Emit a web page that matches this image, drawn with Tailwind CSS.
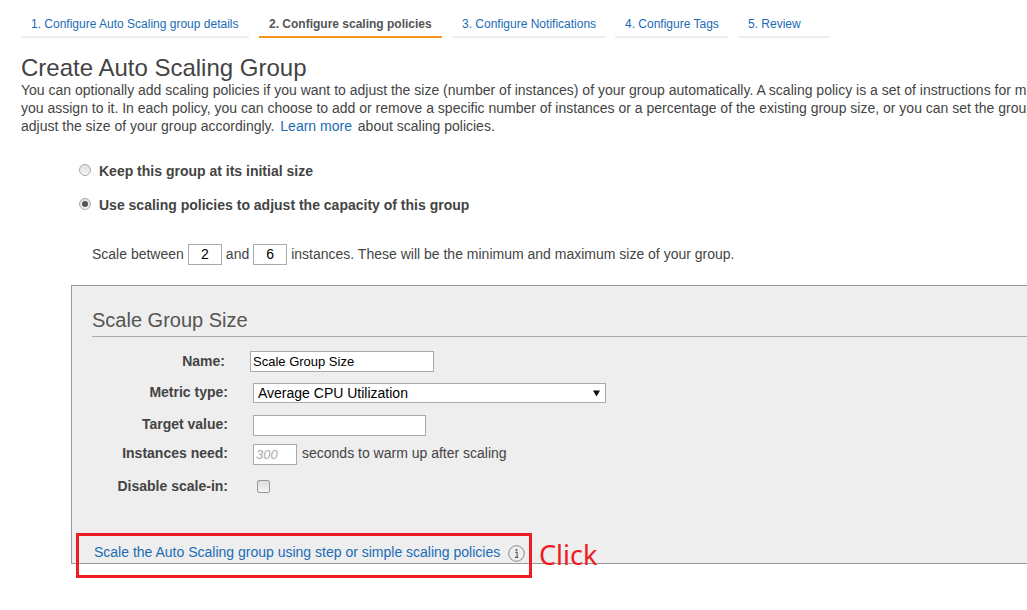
<!DOCTYPE html>
<html lang="en">
<head>
    <meta charset="UTF-8">
    <meta name="viewport" content="width=device-width, initial-scale=1.0">
    <script src="https://cdn.jsdelivr.net/npm/@tailwindcss/browser@4"></script>
    <title>Create Auto Scaling Group</title>
</head>
<body class="bg-white">
<div class="relative w-[1027px] h-[610px] overflow-hidden bg-white text-[#444] font-['Liberation_Sans',Arial,sans-serif]">

    <!-- wizard steps -->
    <div class="flex gap-[10px] pl-[21px] pt-[15px] text-[12px] leading-[18px] text-[#1a6cb5]">
        <div class="w-[228px] h-[23px] pl-[10px] border-b-2 border-[#eee]">1. Configure Auto Scaling group details</div>
        <div class="w-[183px] h-[23px] pl-[10px] border-b-2 border-[#f7941e] font-bold text-[#555]">2. Configure scaling policies</div>
        <div class="w-[153px] h-[23px] pl-[10px] border-b-2 border-[#eee]">3. Configure Notifications</div>
        <div class="w-[113px] h-[23px] pl-[10px] border-b-2 border-[#eee]">4. Configure Tags</div>
        <div class="w-[92px] h-[23px] pl-[10px] border-b-2 border-[#eee]">5. Review</div>
    </div>

    <h1 class="ml-[21px] mt-[16px] text-[24px] leading-[28px] h-[27px] font-normal text-[#444]">Create Auto Scaling Group</h1>

    <div class="ml-[21px] text-[14px] leading-[18px] whitespace-nowrap">
        <p>You can optionally add scaling policies if you want to adjust the size (number of instances) of your group automatically. A scaling policy is a set of instructions for making adjustments</p>
        <p>you assign to it. In each policy, you can choose to add or remove a specific number of instances or a percentage of the existing group size, or you can set the group to a fixed size</p>
        <p>adjust the size of your group accordingly. <a class="text-[#1a6cb5] mx-[2px]">Learn more</a> about scaling policies.</p>
    </div>

    <!-- radios -->
    <div class="ml-[79px] mt-[27px] flex items-center gap-2 h-[18px]">
        <span class="mb-[3px] w-3 h-3 rounded-full border border-[#aaa] bg-gradient-to-b from-[#e0e0e0] to-[#f4f4f4]"></span>
        <span class="text-[14px] font-bold">Keep this group at its initial size</span>
    </div>
    <div class="ml-[79px] mt-[16px] flex items-center gap-2 h-[18px]">
        <span class="mb-[3px] w-3 h-3 rounded-full border border-[#aaa] bg-gradient-to-b from-[#e0e0e0] to-[#f4f4f4] flex items-center justify-center">
            <span class="w-[6px] h-[6px] rounded-full bg-[#555]"></span>
        </span>
        <span class="text-[14px] font-bold">Use scaling policies to adjust the capacity of this group</span>
    </div>

    <div class="ml-[92px] mt-[30px] flex items-center h-[21px] text-[14px] whitespace-nowrap">
        <span>Scale between</span>
        <input value="2" class="ml-[4px] w-[34px] h-[21px] border border-[#aaa] bg-white text-center text-[14px] text-black">
        <span class="mx-[4px]">and</span>
        <input value="6" class="w-[34px] h-[21px] border border-[#aaa] bg-white text-center text-[14px] text-black">
        <span class="ml-[4px]">instances. These will be the minimum and maximum size of your group.</span>
    </div>

    <!-- policy panel -->
    <div class="ml-[71px] mt-[20px] w-[1000px] h-[279px] border border-[#999] bg-[#eee]">
        <h2 class="ml-[20px] mt-[22px] h-[29px] border-b border-[#aaa] text-[20px] leading-[24px] font-normal text-[#555]">Scale Group Size</h2>

        <div class="flex items-center h-[21px] mt-[14px]">
            <label class="w-[153px] text-right text-[14px] font-bold">Name:</label>
            <input value="Scale Group Size" class="ml-[25px] w-[184px] h-[21px] border border-[#aaa] bg-white px-[2px] text-[13px] text-black">
        </div>
        <div class="flex items-center h-[20px] mt-[11px]">
            <label class="w-[156px] pb-[2px] text-right text-[14px] font-bold">Metric type:</label>
            <div class="ml-[25px] w-[353px] h-[20px] flex items-center justify-between border border-[#aaa] bg-white pl-[4px] pr-[5px] text-[14px] text-black">
                <span>Average CPU Utilization</span>
                <svg width="7" height="7" viewBox="0 0 7 7"><path d="M0 0.5h7L3.5 6.5z" fill="#111"/></svg>
            </div>
        </div>
        <div class="flex items-center h-[21px] mt-[12px]">
            <label class="w-[156px] pb-[2px] text-right text-[14px] font-bold">Target value:</label>
            <input class="ml-[25px] w-[173px] h-[21px] border border-[#aaa] bg-white">
        </div>
        <div class="flex items-center h-[21px] mt-[8px]">
            <label class="w-[156px] pb-[2px] text-right text-[14px] font-bold">Instances need:</label>
            <input placeholder="300" class="ml-[25px] w-[44px] h-[21px] border border-[#aaa] bg-white px-[2px] text-[13px] italic placeholder:text-[#aaa]">
            <span class="ml-[5px] pb-[2px] text-[14px]">seconds to warm up after scaling</span>
        </div>
        <div class="flex items-center h-[21px] mt-[11px]">
            <label class="w-[156px] text-right text-[14px] font-bold">Disable scale-in:</label>
            <span class="ml-[29px] w-[13px] h-[13px] rounded-[2px] border border-[#999] bg-gradient-to-b from-[#ddd] to-[#f4f4f4]"></span>
        </div>

        <div class="flex items-center h-[18px] ml-[22px] mt-[46px] text-[14px] text-[#1a6cb5] whitespace-nowrap">
            <a>Scale the Auto Scaling group using step or simple scaling policies</a>
            <svg class="ml-[8px] mt-[2px]" width="17" height="17" viewBox="0 0 17 17" fill="none">
                <circle cx="8.5" cy="8.5" r="7.8" stroke="#888"/>
                <circle cx="8.5" cy="4.9" r="1" fill="#555"/>
                <path d="M7.2 7.3h1.9v5M7 12.4h3.2" stroke="#555" stroke-width="1.1"/>
            </svg>
        </div>
    </div>

    <!-- red annotation on top of the screenshot -->
    <div class="absolute left-[76px] top-[533px] w-[456px] h-[45px] border-[3px] border-[#ed1c24]"></div>
    <div class="absolute left-[539px] top-[537px] text-[27px] leading-[36px] text-[#ed1c24] font-['Noto_Sans',sans-serif]">Click</div>
</div>
</body>
</html>
